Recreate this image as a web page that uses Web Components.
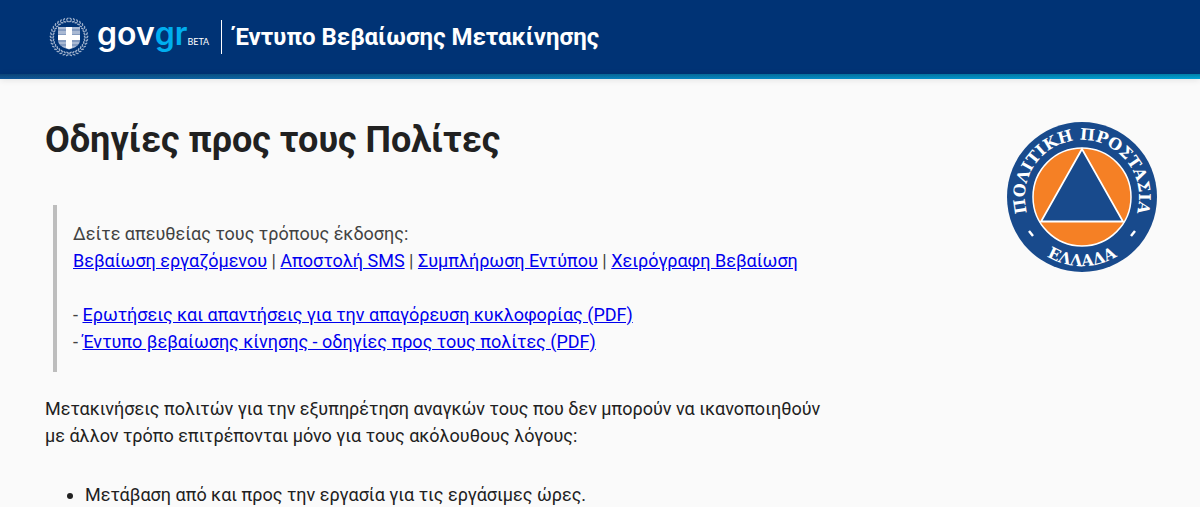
<!DOCTYPE html>
<html lang="el">
<head>
<meta charset="utf-8">
<meta name="viewport" content="width=device-width, initial-scale=1">
<title>Έντυπο Βεβαίωσης Μετακίνησης</title>
<style>
body { margin: 0; background: #fafafa; color: #212121; font: 18px/27px Roboto, "Liberation Sans", sans-serif; }
</style>
</head>
<body>
<gov-header><span slot="title">Έντυπο Βεβαίωσης Μετακίνησης</span></gov-header>
<guide-page>
  <span slot="heading">Οδηγίες προς τους Πολίτες</span>
  <info-quote></info-quote>
  <text-block>Μετακινήσεις πολιτών για την εξυπηρέτηση αναγκών τους που δεν μπορούν να ικανοποιηθούν με άλλον τρόπο επιτρέπονται μόνο για τους ακόλουθους λόγους:</text-block>
  <reason-list></reason-list>
  <civil-seal slot="aside"></civil-seal>
</guide-page>

<script>
const define = (name, html, setup) => customElements.define(name, class extends HTMLElement {
  constructor() {
    super();
    this.attachShadow({ mode: 'open' }).innerHTML = html;
    if (setup) setup(this.shadowRoot);
  }
});

define('greek-emblem', `
<style>:host { display: block; width: 40px; height: 40px; } svg { display: block; }</style>
<svg width="40" height="40" viewBox="0 0 40 40" aria-hidden="true">
  <g id="wreath" fill="#c3cee0" opacity=".8"></g>
  <path d="M9 10h22v13c0 5-5 8-11 9.500C14 31 9 28 9 23z" fill="#a9b9d3"/>
  <path d="M9 13h22M9 18h22M9 24h22M11 28h18" stroke="#5f7dab" stroke-width="1"/>
  <path d="M17 10h6v8h8v5h-8v8l-3 1-3-1v-8H9v-5h8z" fill="#fff"/>
</svg>`, root => {
  const ns = 'http://www.w3.org/2000/svg', g = root.querySelector('#wreath');
  for (let i = 0; i < 34; i++) {
    const a = 270 + (i + .5) * 360 / 34, side = i < 17 ? 1 : -1;
    for (const [r, tilt] of [[18.3, 35], [15.8, -30]]) {
      const e = document.createElementNS(ns, 'ellipse');
      e.setAttribute('cx', 20 + r); e.setAttribute('cy', 20);
      e.setAttribute('rx', .75); e.setAttribute('ry', 1.6);
      e.setAttribute('transform', `rotate(${a} 20 20) rotate(${tilt * side} ${20 + r} 20)`);
      g.append(e);
    }
  }
});

define('gov-logo', `
<style>
:host { display: block; }
a { display: flex; align-items: center; gap: 8px; color: #fff; text-decoration: none; }
.word { display: flex; align-items: flex-end; margin-bottom: 6px; font: 600 32px/40px Inter, sans-serif; }
.gr { color: #00aeef; }
small { padding-bottom: 6px; font: 400 9px/12px Lato, sans-serif; }
</style>
<a href="#"><greek-emblem></greek-emblem><span class="word"><span>gov</span><span class="gr">gr</span><small>BETA</small></span></a>`);

define('gov-header', `
<style>
:host { display: block; }
header { display: flex; align-items: center; gap: 12px; height: 74px; padding: 0 49px; background: #003375; color: #fff; }
.rule { width: 1px; height: 34px; background: #fff; }
.title { font-size: 24px; line-height: 32px; font-weight: 700; }
.stripe { height: 5px; background: linear-gradient(#00000038, #0000 100%), linear-gradient(90deg, #0f5596, #0880bc 50%, #00a3d6); box-shadow: 0 1px 6px #0000001c; }
</style>
<header><gov-logo></gov-logo><span class="rule"></span><div class="title"><slot name="title"></slot></div></header>
<div class="stripe"></div>`);

define('guide-page', `
<style>
:host { display: block; padding: 36px 43px 0 45px; }
.cols { display: flex; justify-content: space-between; align-items: flex-start; }
main { flex: 0 1 795px; }
aside { padding-top: 7px; }
h1 { margin: 0; font-size: 36px; line-height: 50px; font-weight: 700; }
</style>
<div class="cols"><main><h1><slot name="heading"></slot></h1><slot></slot></main><aside><slot name="aside"></slot></aside></div>`);

define('info-quote', `
<style>
:host { display: block; margin: 40px 8px 23px; }
blockquote { margin: 0; padding: 15px 0 17px 16px; border-left: 4px solid #bdbdbd; color: #424242; }
p { margin: 0; }
p + p { margin-top: 27px; }
a { color: #0000ee; }
</style>
<blockquote>
<p>Δείτε απευθείας τους τρόπους έκδοσης:<br>
<a href="#">Βεβαίωση εργαζόμενου</a> | <a href="#">Αποστολή SMS</a> | <a href="#">Συμπλήρωση Εντύπου</a> | <a href="#">Χειρόγραφη Βεβαίωση</a></p>
<p>- <a href="#">Ερωτήσεις και απαντήσεις για την απαγόρευση κυκλοφορίας (PDF)</a><br>
- <a href="#">Έντυπο βεβαίωσης κίνησης - οδηγίες προς τους πολίτες (PDF)</a></p>
</blockquote>`);

define('text-block', `
<style>:host { display: block; } p { margin: 0; }</style>
<p><slot></slot></p>`);

define('reason-list', `
<style>:host { display: block; margin-top: 32px; } ul { margin: 0; padding-left: 40px; }</style>
<ul><li>Μετάβαση από και προς την εργασία για τις εργάσιμες ώρες.</li></ul>`);

define('civil-seal', `
<style>
:host { display: block; width: 150px; } svg { display: block; }
text { font: 700 16px "DejaVu Serif", serif; fill: #fff; }
</style>
<svg width="150" height="150" viewBox="0 0 150 150">
  <circle cx="75" cy="75" r="75" fill="#184a8c"/>
  <circle cx="75" cy="75" r="49" fill="#f58025" stroke="#fff" stroke-width="1.500"/>
  <path d="M75 27L34 99.500H116z" fill="#184a8c" stroke="#fff" stroke-width="1.800"/>
  <path d="M22 109l4 5M128 109l-4 5" stroke="#fff" stroke-width="2.500"/>
  <path id="top" d="M75 132A57 57 0 1 1 75.010 132" fill="none"/>
  <path id="bottom" d="M6 75A69 69 0 0 0 144 75" fill="none"/>
  <text text-anchor="middle"><textPath href="#top" startOffset="50%">ΠΟΛΙΤΙΚΗ ΠΡΟΣΤΑΣΙΑ</textPath></text>
  <text text-anchor="middle"><textPath href="#bottom" startOffset="50%">ΕΛΛΑΔΑ</textPath></text>
</svg>`);
</script>
</body>
</html>
